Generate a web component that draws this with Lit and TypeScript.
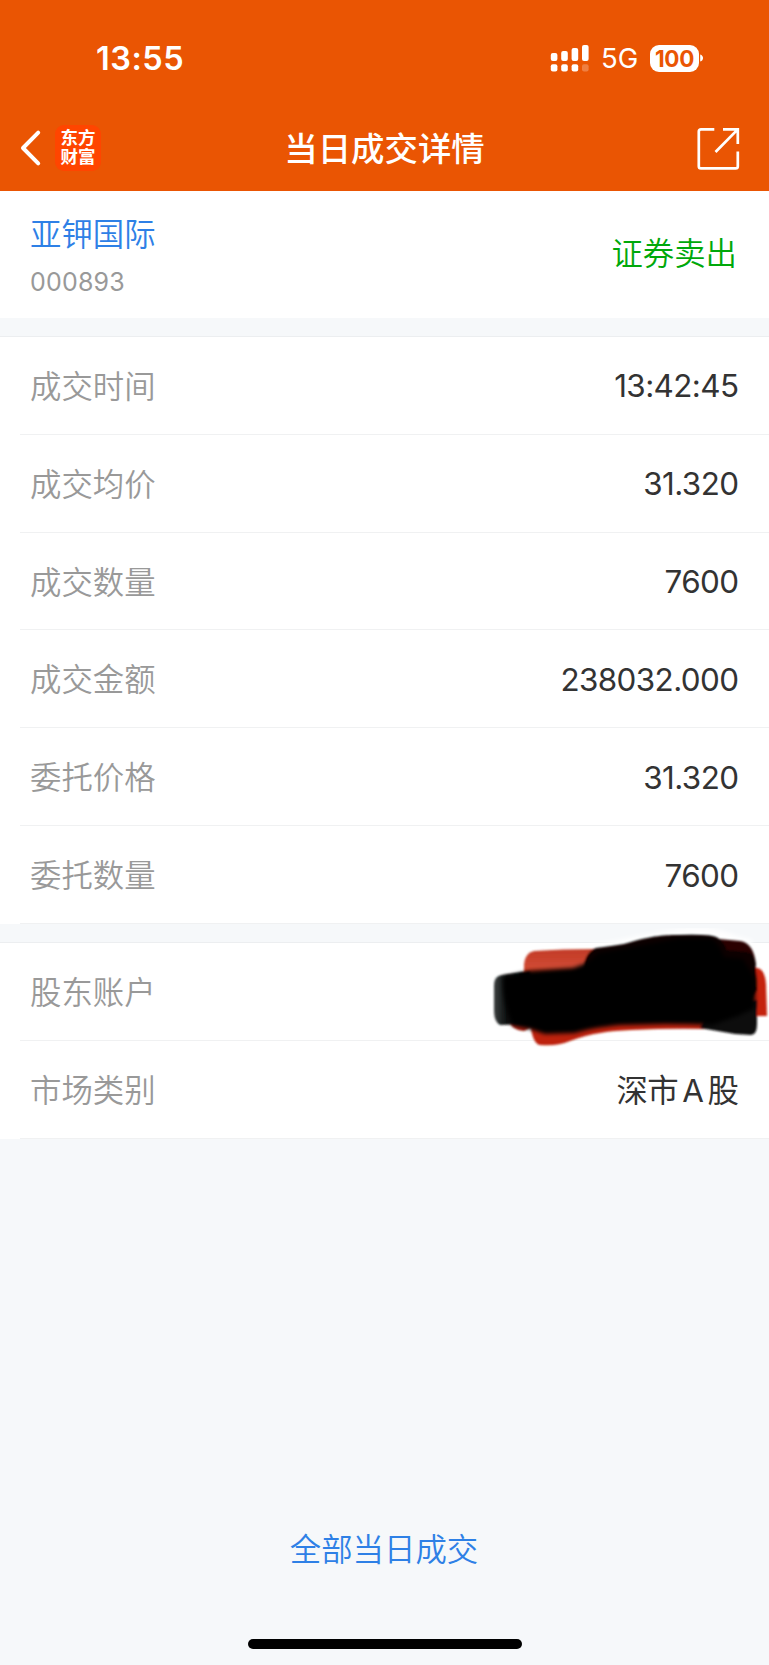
import { LitElement, html, css, svg } from "lit";
import { customElement, property } from "lit/decorators.js";

@customElement("detail-row")
class DetailRow extends LitElement {
  @property() label = "";
  @property() value = "";
  static styles = css`
    :host {
      display: flex;
      flex: 1 1 0;
      min-height: 0;
      padding-left: 20px;
    }
    .row {
      flex: 1;
      display: flex;
      align-items: center;
      justify-content: space-between;
      box-sizing: border-box;
      border-bottom: 1px solid #f0f1f2;
      padding: 2px 30.6px 0 10px;
      line-height: 40px;
    }
    .label {
      color: #999;
      font-size: 31.4px;
      font-weight: 350;
      font-family: "Noto Sans CJK SC DemiLight", "Noto Sans CJK SC", sans-serif;
      padding-bottom: 3px;
    }
    .value {
      color: #333;
      font-size: 31.4px;
      font-weight: 400;
      letter-spacing: -0.6px;
      word-spacing: -4px;
    }
  `;
  render() {
    return html`<div class="row">
      <span class="label">${this.label}</span>
      <span class="value">${this.value}</span>
    </div>`;
  }
}

@customElement("app-root")
class AppRoot extends LitElement {
  static styles = css`
    :host {
      display: flex;
      flex-direction: column;
      width: 769px;
      height: 1665px;
      overflow: hidden;
      background: #f6f8fa;
      font-family: Inter, "Noto Sans CJK SC", sans-serif;
    }
    .header {
      height: 191px;
      flex: none;
      background: #ea5503;
      color: #fff;
      display: flex;
      flex-direction: column;
    }
    .status {
      height: 116px;
      box-sizing: border-box;
      padding: 0 65px 0 96px;
      display: flex;
      align-items: center;
      justify-content: space-between;
    }
    .clock {
      font-size: 32.5px;
      font-weight: 600;
      letter-spacing: 0.5px;
    }
    .indicators {
      display: flex;
      align-items: center;
    }
    .signal {
      margin-right: 12px;
    }
    .network {
      font-size: 27.5px;
      width: 49px;
      line-height: 34px;
    }
    .battery {
      width: 49px;
      height: 27px;
      border-radius: 9px;
      background: #fff;
      color: #ea5503;
      font-size: 22.5px;
      font-weight: 700;
      line-height: 27px;
      text-align: center;
      letter-spacing: -0.4px;
    }
    .nav {
      height: 64px;
      padding: 0 29px 0 20px;
      display: grid;
      grid-template-columns: 1fr auto 1fr;
      align-items: center;
    }
    .left {
      display: flex;
      align-items: center;
      gap: 12px;
    }
    .logo {
      width: 46px;
      height: 46px;
      border-radius: 9px;
      background: #ff4500;
      display: flex;
      flex-direction: column;
      align-items: center;
      justify-content: center;
      box-sizing: border-box;
      font-family: "Liberation Sans", "Noto Sans CJK SC", sans-serif;
      font-size: 17.5px;
      font-weight: 700;
      line-height: 19px;
    }
    .title {
      font-size: 33.4px;
      line-height: 48px;
      font-weight: 500;
      padding-top: 1px;
      transform: translateX(4.5px);
    }
    .share {
      justify-self: end;
    }
    svg {
      display: block;
    }
    .stock {
      flex: none;
      height: 127px;
      box-sizing: border-box;
      background: #fff;
      padding: 0 32px 0 30px;
      display: flex;
      justify-content: space-between;
      align-items: center;
    }
    .name {
      color: #2e80e6;
      font-size: 31.4px;
      line-height: 44px;
      font-weight: 350;
      font-family: "Noto Sans CJK SC DemiLight", "Noto Sans CJK SC", sans-serif;
    }
    .code {
      color: #999;
      font-size: 25px;
      line-height: 32px;
      margin-top: 11px;
      letter-spacing: 0.2px;
    }
    .side {
      color: #00a80a;
      font-size: 31.4px;
      line-height: 44px;
      font-weight: 350;
      padding-bottom: 2px;
    }
    .group {
      position: relative;
      flex: none;
      display: flex;
      flex-direction: column;
      box-sizing: border-box;
      margin-top: 18px;
      background: #fff;
      border-top: 1px solid #eceef0;
    }
    .trade {
      height: 588px;
    }
    .account {
      height: 197px;
    }
    .redaction {
      position: absolute;
      left: 484px;
      top: -15px;
    }
    .bottom {
      flex: 1;
      display: flex;
      flex-direction: column;
      justify-content: flex-end;
      align-items: center;
    }
    .all {
      color: #2e80e6;
      font-size: 31.4px;
      font-weight: 350;
      font-family: "Noto Sans CJK SC DemiLight", "Noto Sans CJK SC", sans-serif;
      line-height: 44px;
      margin-bottom: 69px;
      padding-right: 1px;
    }
    .home {
      width: 274px;
      height: 10px;
      border-radius: 5px;
      background: #000;
      margin-bottom: 16px;
    }
  `;

  private trade = [
    ["成交时间", "13:42:45"],
    ["成交均价", "31.320"],
    ["成交数量", "7600"],
    ["成交金额", "238032.000"],
    ["委托价格", "31.320"],
    ["委托数量", "7600"],
  ];

  private account = [
    ["股东账户", ""],
    ["市场类别", "深市 A 股"],
  ];

  private rows(list: string[][]) {
    return list.map(
      ([label, value]) =>
        html`<detail-row .label=${label} .value=${value}></detail-row>`
    );
  }

  private signal() {
    const tops = [8, 6, 3, 0];
    return html`<svg class="signal" width="39" height="27" viewBox="0 0 39 27" fill="#fff">
      ${tops.map(
        (y, i) => svg`
        <rect x=${i * 10.4 + 0.8} y=${y} width="6.6" height=${16 - y} rx="2" />
        <rect x=${i * 10.4 + 0.8} y="19.3" width="6.6" height="7.3" rx="2" opacity=${i === 3 ? 0.25 : 1} />`
      )}
    </svg>`;
  }

  render() {
    return html`
      <div class="header">
        <div class="status">
          <span class="clock">13:55</span>
          <div class="indicators">
            ${this.signal()}
            <span class="network">5G</span>
            <span class="battery">100</span>
            <svg width="5" height="10" viewBox="0 0 5 10">
              <path d="M1.2 1.5C5 2.5 5 7.5 1.2 8.5Z" fill="#fff" />
            </svg>
          </div>
        </div>
        <div class="nav">
          <div class="left">
            <svg width="23" height="38" viewBox="0 0 23 38" fill="none" stroke="#fff" stroke-width="4" stroke-linecap="round" stroke-linejoin="round">
              <path d="M18.2 3.6L3 19L18.2 34.4" />
            </svg>
            <div class="logo"><span>东方</span><span>财富</span></div>
          </div>
          <div class="title">当日成交详情</div>
          <svg class="share" width="43" height="43" viewBox="0 0 43 43" fill="none" stroke="#fff" stroke-width="2.7">
            <path d="M17.3 2.3H4Q1.8 2.3 1.8 4.5V39.2Q1.8 41.4 4 41.4H38.6Q40.8 41.4 40.8 39.2V24.5" />
            <path d="M26 2.3H40.8V17M40 3.1L18.5 25" />
          </svg>
        </div>
      </div>
      <div class="stock">
        <div>
          <div class="name">亚钾国际</div>
          <div class="code">000893</div>
        </div>
        <div class="side">证券卖出</div>
      </div>
      <div class="group trade">${this.rows(this.trade)}</div>
      <div class="group account">
        ${this.rows(this.account)}
        <svg class="redaction" width="285" height="124" viewBox="484 928 285 124">
          <defs>
            <filter id="soft" x="-10%" y="-10%" width="120%" height="120%">
              <feGaussianBlur stdDeviation="1.2" />
            </filter>
            <filter id="softer" x="-10%" y="-10%" width="120%" height="120%">
              <feGaussianBlur stdDeviation="2" />
            </filter>
            <linearGradient id="edge" x1="0" x2="1" y1="0" y2="0">
              <stop offset="0" stop-color="#3a3e3e" />
              <stop offset="0.3" stop-color="#080a0a" />
              <stop offset="1" stop-color="#000" />
            </linearGradient>
            <linearGradient id="red" x1="0" x2="0" y1="0" y2="1">
              <stop offset="0" stop-color="#c23a26" />
              <stop offset="0.45" stop-color="#d04a34" />
              <stop offset="0.6" stop-color="#bd2a10" />
              <stop offset="1" stop-color="#b8200a" />
            </linearGradient>
          </defs>
          <path filter="url(#softer)" fill="#fff" d="M590 945C640 938 660 928 700 928C722 928 732 936 752 940L750 960L600 960Z" />
          <g filter="url(#soft)">
            <path fill="url(#red)" d="M524 980V964Q525 953 534 951Q560 949 600 949L600 990L524 985Z" />
            <path fill="#bd240c" d="M530 1020Q532 1044 540 1045C552 1046 560 1045 570 1041C592 1033 608 1031 632 1030Q670 1028 710 1029L710 1015L530 1015Z" />
            <path fill="#a51e0a" d="M508 1020Q513 1031 524 1031L535 1025L520 1012Z" />
            <path fill="#c4240c" d="M745 968H757Q765 969 766 984L767 1016H745Z" />
            <path fill="#2a0603" d="M620 947C640 941 655 936 680 936L718 939L740 941Q754 943 756 965L740 975L630 970Z" />
            <path fill="#0c0202" d="M583 972Q584 952 596 948Q612 946 624 944C654 935 665 935 680 935Q712 934 718 938Q724 942 727 950L748 952Q756 956 756 970L757 990L740 1018L590 1010Z" />
            <path fill="url(#edge)" d="M494 985Q494 976 502 975L530 971L540 1000L530 1024L500 1025Q494 1022 494 1010Z" />
            <path fill="#101010" d="M710 1005L757 1000V1024Q757 1035 751 1035L735 1034L700 1028Z" />
          </g>
          <path filter="url(#softer)" fill="#000" d="M503 977L530 971L573 968L587 963L598 953L626 948L680 938H710Q720 943 724 957L743 959L755 978V1008L738 1016L712 1025Q690 1024 665 1024L620 1025Q590 1028 575 1033L545 1034L530 1029L512 1025Q502 1000 503 977Z" />
        </svg>
      </div>
      <div class="bottom">
        <div class="all">全部当日成交</div>
        <div class="home"></div>
      </div>
    `;
  }
}
